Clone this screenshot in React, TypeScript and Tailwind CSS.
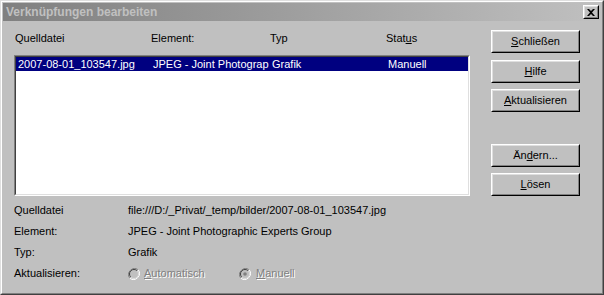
import React from 'react'

const raised =
  'border border-t-white border-l-white border-r-black border-b-black'
const raisedInner =
  'border border-t-[#dfdfdf] border-l-[#dfdfdf] border-r-[#808080] border-b-[#808080]'

function Button({ children, className = '' }: { children: React.ReactNode; className?: string }) {
  return (
    <div className={`${raised} h-[23px] w-[89px] bg-[#c0c0c0] ${className}`}>
      <div className={`${raisedInner} flex h-full w-full items-center justify-center text-black`}>
        {children}
      </div>
    </div>
  )
}

function Radio({ checked }: { checked?: boolean }) {
  return (
    <svg width="12" height="12" viewBox="0 0 12 12" className="shrink-0">
      <path d="M10.2 1.8 A6 6 0 0 0 1.8 10.2" fill="none" stroke="#808080" strokeWidth="1" />
      <path d="M1.8 10.2 A6 6 0 0 0 10.2 1.8" fill="none" stroke="#ffffff" strokeWidth="1" />
      <circle cx="6" cy="6" r="4.6" fill="#c0c0c0" />
      <path d="M9.2 2.8 A4.5 4.5 0 0 0 2.8 9.2" fill="none" stroke="#404040" strokeWidth="1" />
      <path d="M2.8 9.2 A4.5 4.5 0 0 0 9.2 2.8" fill="none" stroke="#dfdfdf" strokeWidth="1" />
      {checked && <circle cx="6" cy="6" r="1.8" fill="#808080" />}
    </svg>
  )
}

const disabledText = 'text-[#808080] [text-shadow:1px_1px_0_#ffffff]'

export default function App() {
  const rows = [
    { label: 'Quelldatei', value: 'file:///D:/_Privat/_temp/bilder/2007-08-01_103547.jpg' },
    { label: 'Element:', value: 'JPEG - Joint Photographic Experts Group' },
    { label: 'Typ:', value: 'Grafik' },
  ]

  return (
    <div
      className="h-[295px] w-[604px] border border-t-[#dfdfdf] border-l-[#dfdfdf] border-r-[#404040] border-b-[#404040] bg-[#c0c0c0] text-[11px] leading-[13px] text-black"
      style={{ fontFamily: "'Liberation Sans', Arial, sans-serif" }}
    >
      <div className="h-full w-full border border-t-white border-l-white border-r-[#808080] border-b-[#808080] p-px">
        {/* Title bar */}
        <div className="flex h-[18px] items-center justify-between bg-gradient-to-r from-[#808080] to-[#c0c0c0] pl-[3px] pr-[2px]">
          <span className="text-[12px] font-bold text-[#c0c0c0]">Verknüpfungen bearbeiten</span>
          <div className={`${raised} h-[14px] w-[16px] bg-[#c0c0c0]`}>
            <div className={`${raisedInner} flex h-full w-full items-center justify-center`}>
              <svg width="8" height="7" viewBox="0 0 8 7">
                <path d="M0 0h2l2 2 2-2h2L5 3.5 8 7H6L4 5 2 7H0l3-3.5z" fill="#000" />
              </svg>
            </div>
          </div>
        </div>

        {/* Body */}
        <div className="flex">
          <div className="w-[467px] shrink-0 pl-[11px] pt-[11px]">
            <div className="flex pl-px">
              <span className="w-[136px]">Quelldatei</span>
              <span className="w-[119px]">Element:</span>
              <span className="w-[116px]">Typ</span>
              <span>
                Stat<u>u</u>s
              </span>
            </div>

            <div className="mt-[10px] h-[141px] border border-t-[#808080] border-l-[#808080] border-r-white border-b-white">
              <div className="h-full border border-t-[#404040] border-l-[#404040] border-r-[#dfdfdf] border-b-[#dfdfdf] bg-white">
                <div className="flex h-[14px] items-center bg-[#000080] pl-[2px] text-white">
                  <span className="w-[135px]">2007-08-01_103547.jpg</span>
                  <span className="w-[119px] whitespace-nowrap">JPEG - Joint Photograp</span>
                  <span className="w-[116px]">Grafik</span>
                  <span>Manuell</span>
                </div>
              </div>
            </div>

            <div className="mt-[4px]">
              {rows.map((r) => (
                <div key={r.label} className="flex h-[21px] items-center">
                  <span className="w-[114px]">{r.label}</span>
                  <span className="whitespace-nowrap">{r.value}</span>
                </div>
              ))}
              <div className="flex h-[21px] items-center">
                <span className="w-[114px]">Aktualisieren:</span>
                <div className="flex w-[111px] items-center">
                  <Radio />
                  <span className={`ml-[4px] ${disabledText}`}>
                    <u>A</u>utomatisch
                  </span>
                </div>
                <div className="flex items-center">
                  <Radio checked />
                  <span className={`ml-[5px] ${disabledText}`}>
                    <u>M</u>anuell
                  </span>
                </div>
              </div>
            </div>
          </div>

          <div className="ml-[21px] flex flex-col pt-[9px]">
            <Button>
              <span>
                <u>S</u>chließen
              </span>
            </Button>
            <Button className="mt-[7px]">
              <span>
                <u>H</u>ilfe
              </span>
            </Button>
            <Button className="mt-[6px]">
              <span>
                <u>A</u>ktualisieren
              </span>
            </Button>
            <Button className="mt-[32px]">
              <span>
                Än<u>d</u>ern...
              </span>
            </Button>
            <Button className="mt-[6px]">
              <span>
                <u>L</u>ösen
              </span>
            </Button>
          </div>
        </div>
      </div>
    </div>
  )
}
